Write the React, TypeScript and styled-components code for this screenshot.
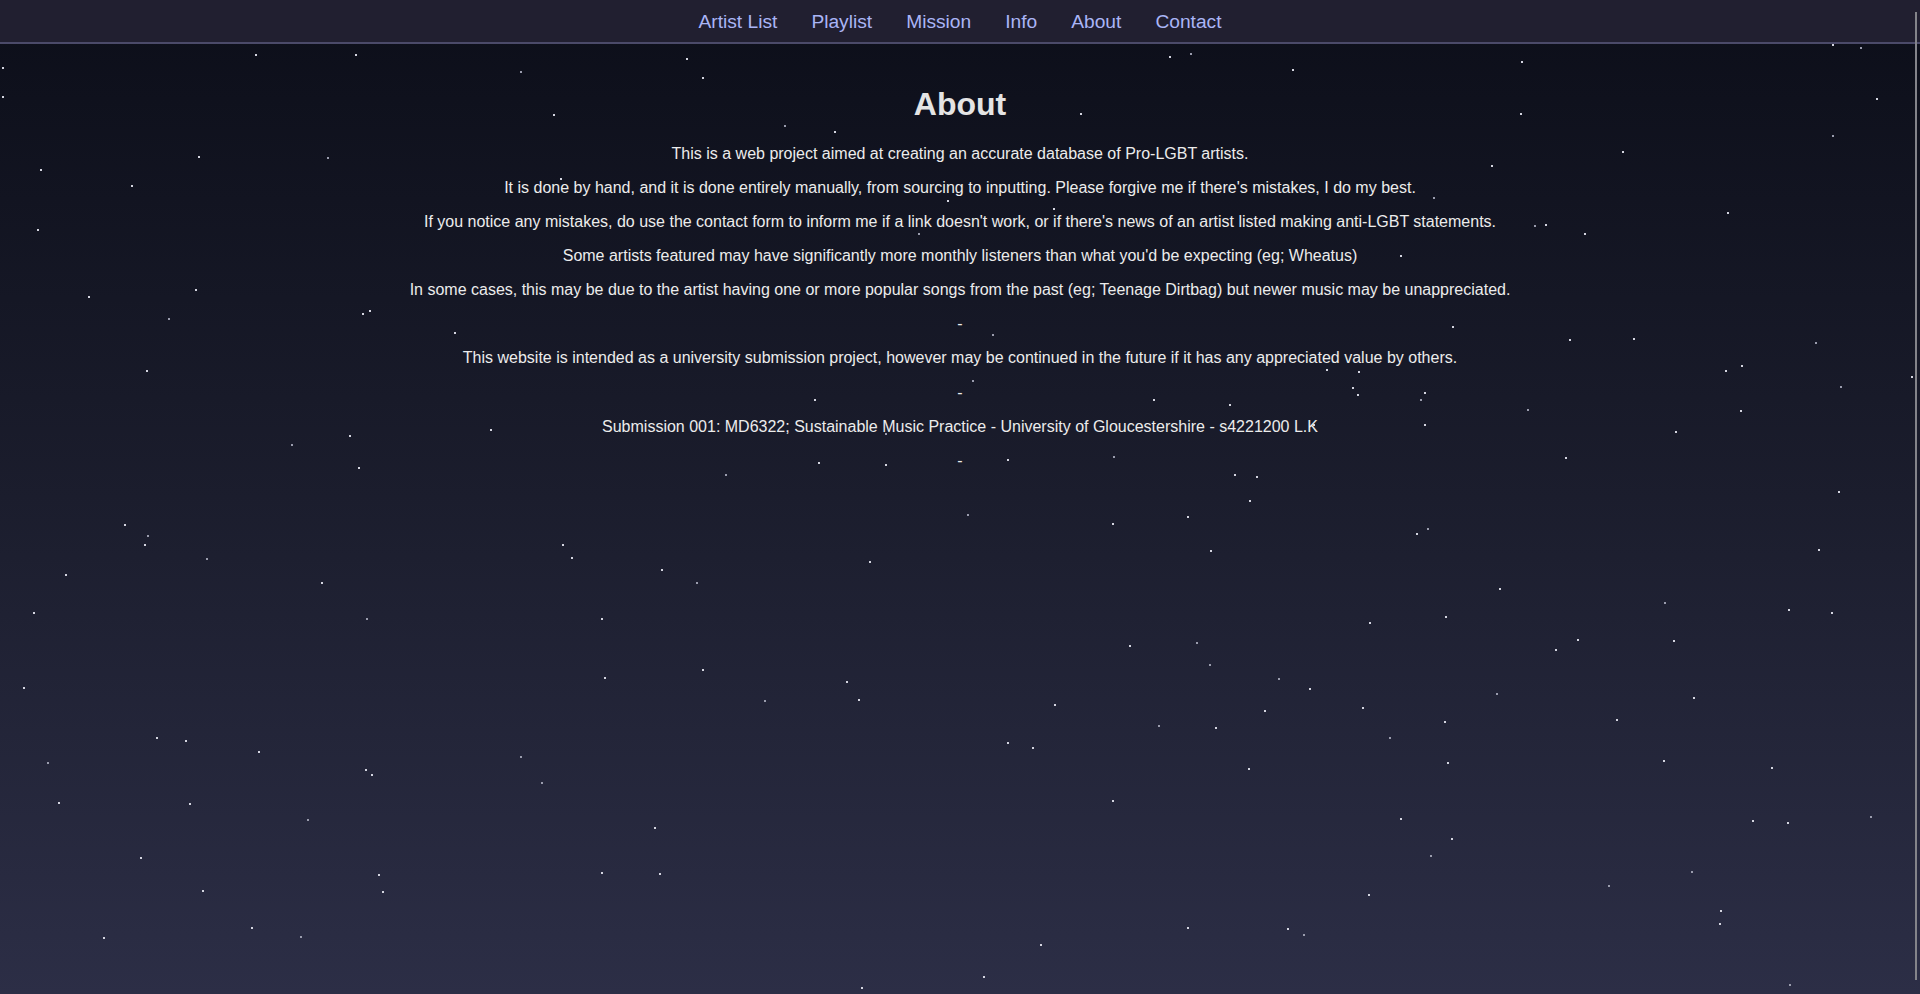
import styled, { createGlobalStyle } from 'styled-components';

const GlobalStyle = createGlobalStyle`
    html, body {
        margin: 0;
        padding: 0;
        height: 100%;
        overflow: hidden;
    }
    body {
        font-family: "Liberation Sans", Arial, sans-serif;
        background: #0e101b;
    }
`;

const Page = styled.div`
    position: relative;
    min-height: 100vh;
    background: linear-gradient(to bottom, #0c0e19 0%, #1b1d2d 50%, #2c2e46 100%);
    overflow: hidden;
`;

const NavBar = styled.nav`
    position: relative;
    z-index: 2;
    box-sizing: border-box;
    height: 44px;
    padding-top: 2px;
    display: flex;
    justify-content: center;
    align-items: center;
    gap: 34px;
    background: #211f30;
    border-bottom: 2px solid #4b4a69;
`;

const NavLink = styled.a`
    color: #aab5f6;
    font-size: 19.2px;
    text-decoration: none;
    cursor: pointer;
`;

const Content = styled.main`
    position: relative;
    z-index: 1;
    padding: 21px 0 0;
    text-align: center;
    color: #ececec;
`;

const Title = styled.h1`
    margin: 21.44px 0;
    font-size: 32px;
    font-weight: 700;
    color: #e4e4e4;
`;

const Line = styled.p`
    margin: 16px 0;
    font-size: 16px;
    line-height: 18.1px;
`;

const Sky = styled.div`
    position: absolute;
    inset: 0;
    pointer-events: none;
`;

const Star = styled.span<{ $dim?: boolean }>`
    position: absolute;
    width: 2px;
    height: 2px;
    background: ${p => (p.$dim ? '#9a9cad' : '#d4d5e0')};
`;

const ScrollThumb = styled.div`
    position: fixed;
    top: 12px;
    right: 3px;
    width: 2px;
    height: 968px;
    background: #84848a;
    z-index: 3;
`;

// star coords read off the reference at 1568px width, scaled up to 1920
const SCALE = 1920 / 1568;
const stars: [number, number][] = [
    [2, 55], [208, 44], [290, 44], [425, 58], [560, 47], [573, 63], [955, 46], [972, 43], [1055, 56],
    [1242, 50], [1496, 36], [1519, 38], [1532, 80], [2, 78], [452, 93], [640, 102], [681, 107],
    [882, 92], [1241, 92], [1496, 110], [1325, 123], [1218, 135], [162, 127], [267, 128], [33, 138],
    [107, 151], [457, 145], [1170, 161], [860, 170], [773, 163], [1410, 173], [1253, 184], [1262, 183],
    [1294, 190], [30, 187], [750, 190], [1143, 208], [72, 242], [159, 236], [137, 260], [296, 256],
    [301, 253], [371, 271], [810, 273], [1186, 266], [1281, 277], [1334, 276], [1482, 279], [119, 302],
    [1109, 303], [1083, 301], [794, 310], [1409, 302], [1422, 298], [1561, 307], [1503, 315],
    [1104, 316], [1108, 322], [1163, 320], [1160, 326], [665, 326], [942, 326], [1004, 330],
    [1247, 334], [1421, 335], [400, 350], [285, 355], [723, 354], [1072, 346], [1163, 346],
    [1368, 352], [238, 363], [292, 381], [668, 377], [822, 375], [909, 372], [1278, 373],
    [1008, 387], [1026, 389], [592, 387], [723, 379], [1020, 408], [1501, 401], [790, 420],
    [969, 421], [908, 427], [101, 428], [120, 437], [118, 444], [459, 444], [466, 455], [1165, 431],
    [1156, 435], [988, 449], [1485, 448], [168, 456], [710, 458], [540, 465], [53, 469], [568, 475],
    [262, 475], [1224, 480], [27, 500], [299, 505], [491, 505], [1118, 508], [1180, 503], [1359, 492],
    [1460, 497], [1495, 500], [922, 527], [977, 524], [1288, 522], [1270, 530], [1366, 523],
    [987, 542], [493, 553], [573, 546], [691, 556], [1044, 554], [1069, 562], [19, 561], [701, 571],
    [624, 572], [861, 575], [1112, 577], [1032, 580], [1222, 566], [1383, 569], [1320, 587],
    [1179, 589], [946, 592], [992, 594], [127, 602], [151, 604], [1134, 602], [822, 606], [843, 610],
    [211, 613], [425, 617], [1182, 622], [1358, 621], [1446, 626], [38, 622], [298, 628], [303, 632],
    [1019, 627], [442, 639], [47, 655], [154, 656], [908, 653], [251, 669], [1143, 668], [1431, 670],
    [1459, 671], [1527, 666], [534, 675], [1185, 684], [114, 700], [1168, 698], [309, 714], [491, 712],
    [538, 713], [1381, 711], [165, 727], [312, 728], [1117, 730], [1313, 723], [1405, 743],
    [1404, 754], [205, 757], [245, 764], [84, 765], [969, 757], [1051, 758], [1064, 763], [849, 771],
    [803, 797], [703, 806], [1461, 804],
];

const navItems = ['Artist List', 'Playlist', 'Mission', 'Info', 'About', 'Contact'];

const App = () => {
    return (
        <Page>
            <GlobalStyle />
            <Sky>
                {stars.map(([x, y], i) => (
                    <Star
                        key={i}
                        $dim={i % 4 === 3}
                        style={{ left: Math.round(x * SCALE), top: Math.round(y * SCALE) }}
                    />
                ))}
            </Sky>
            <NavBar>
                {navItems.map(item => (
                    <NavLink key={item}>{item}</NavLink>
                ))}
            </NavBar>
            <Content>
                <Title>About</Title>
                <Line>This is a web project aimed at creating an accurate database of Pro-LGBT artists.</Line>
                <Line>
                    It is done by hand, and it is done entirely manually, from sourcing to inputting. Please forgive me if
                    there's mistakes, I do my best.
                </Line>
                <Line>
                    If you notice any mistakes, do use the contact form to inform me if a link doesn't work, or if there's
                    news of an artist listed making anti-LGBT statements.
                </Line>
                <Line>
                    Some artists featured may have significantly more monthly listeners than what you'd be expecting (eg;
                    Wheatus)
                </Line>
                <Line>
                    In some cases, this may be due to the artist having one or more popular songs from the past (eg; Teenage
                    Dirtbag) but newer music may be unappreciated.
                </Line>
                <Line>-</Line>
                <Line>
                    This website is intended as a university submission project, however may be continued in the future if
                    it has any appreciated value by others.
                </Line>
                <Line>-</Line>
                <Line>
                    Submission 001: MD6322; Sustainable Music Practice - University of Gloucestershire - s4221200 L.K
                </Line>
                <Line>-</Line>
            </Content>
            <ScrollThumb />
        </Page>
    );
};

export default App;
